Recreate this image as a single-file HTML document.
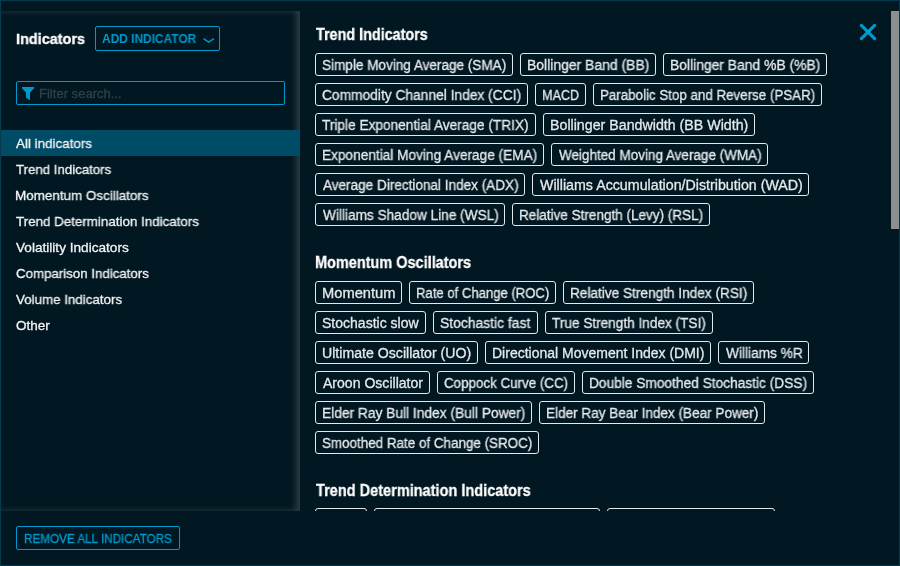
<!DOCTYPE html>
<html><head><meta charset="utf-8"><style>
html,body{margin:0;padding:0;}
body{width:900px;height:566px;overflow:hidden;position:relative;background:#011721;font-family:'Liberation Sans', sans-serif;}
.frame{position:absolute;left:0;top:0;width:898px;height:564px;border:1px solid #05394b;}
.panel{position:absolute;left:1px;top:11px;width:299px;height:500px;background:#011721;box-shadow:inset -4px 0 6px rgba(255,255,255,0.17);}
.sel{position:absolute;left:1px;top:130px;width:299px;height:26px;background:#004b66;}
.btn{position:absolute;border:1px solid #0099cc;border-radius:2px;box-sizing:border-box;}
.t{position:absolute;will-change:transform;-webkit-text-stroke:0.3px currentColor;white-space:nowrap;line-height:40px;height:40px;transform-origin:0 0;}
.clip{position:absolute;left:300px;top:11px;width:591px;height:500px;overflow:hidden;}
.chip{position:absolute;height:23px;box-sizing:border-box;border:1px solid #e4e9ec;border-radius:3px;}
.thumb{position:absolute;left:891px;top:11px;width:8px;height:218px;background:#8f8f8f;}
</style></head><body>
<div class="frame"></div>
<div class="panel"></div>
<div class="sel"></div>
<div class="btn" style="left:95px;top:26px;width:125px;height:25px"></div>
<svg style="position:absolute;left:202px;top:36px" width="14" height="8" viewBox="0 0 14 8"><path d="M1.5 2.6 L6.7 6.2 L11.9 2.6" fill="none" stroke="#0099cc" stroke-width="1.4"/></svg>
<div class="btn" style="left:16px;top:81px;width:269px;height:24px"></div>
<svg style="position:absolute;left:21px;top:86px" width="14" height="15" viewBox="0 0 14 15"><path d="M1 1.1 H13.2 V2.3 L9 6.5 V14 H8.3 L5 11.4 V6.5 L1 2.3 Z" fill="#0099cc"/></svg>
<div class="btn" style="left:16px;top:526px;width:164px;height:24px;border-color:#0099cc"></div>
<div class="clip">
<div class="chip" style="left:15px;top:42px;width:198px"></div><div class="chip" style="left:220px;top:42px;width:136px"></div><div class="chip" style="left:363px;top:42px;width:164px"></div><div class="chip" style="left:15px;top:72px;width:213px"></div><div class="chip" style="left:235px;top:72px;width:51px"></div><div class="chip" style="left:293px;top:72px;width:229px"></div><div class="chip" style="left:15px;top:102px;width:221px"></div><div class="chip" style="left:243px;top:102px;width:212px"></div><div class="chip" style="left:15px;top:132px;width:229px"></div><div class="chip" style="left:251px;top:132px;width:217px"></div><div class="chip" style="left:15px;top:162px;width:210px"></div><div class="chip" style="left:232px;top:162px;width:277px"></div><div class="chip" style="left:15px;top:192px;width:190px"></div><div class="chip" style="left:212px;top:192px;width:198px"></div><div class="chip" style="left:15px;top:270px;width:87px"></div><div class="chip" style="left:109px;top:270px;width:147px"></div><div class="chip" style="left:263px;top:270px;width:191px"></div><div class="chip" style="left:15px;top:300px;width:111px"></div><div class="chip" style="left:133px;top:300px;width:105px"></div><div class="chip" style="left:245px;top:300px;width:168px"></div><div class="chip" style="left:15px;top:330px;width:163px"></div><div class="chip" style="left:185px;top:330px;width:226px"></div><div class="chip" style="left:418px;top:330px;width:91px"></div><div class="chip" style="left:15px;top:360px;width:115px"></div><div class="chip" style="left:137px;top:360px;width:138px"></div><div class="chip" style="left:282px;top:360px;width:232px"></div><div class="chip" style="left:15px;top:390px;width:217px"></div><div class="chip" style="left:239px;top:390px;width:226px"></div><div class="chip" style="left:15px;top:420px;width:224px"></div><div class="chip" style="left:15px;top:497px;width:52px"></div><div class="chip" style="left:74px;top:497px;width:226px"></div><div class="chip" style="left:307px;top:497px;width:168px"></div>
</div>
<div class="t" style="left:15.98px;top:19.01px;font-size:15px;font-weight:700;color:#ffffff;transform:scaleX(0.9640)">Indicators</div><div class="t" style="left:101.96px;top:18.83px;font-size:12px;font-weight:700;color:#0099cc;transform:scaleX(0.9927);-webkit-text-stroke:0px currentColor">ADD INDICATOR</div><div class="t" style="left:38.70px;top:73.83px;font-size:12.5px;font-weight:400;color:#2f4149;transform:scaleX(1.0435)">Filter search...</div><div class="t" style="left:16.04px;top:123.98px;font-size:13.5px;font-weight:400;color:#f2f4f5;transform:scaleX(0.9932)">All indicators</div><div class="t" style="left:16.02px;top:149.98px;font-size:13.5px;font-weight:400;color:#f2f4f5;transform:scaleX(0.9814)">Trend Indicators</div><div class="t" style="left:15.41px;top:175.98px;font-size:13.5px;font-weight:400;color:#f2f4f5;transform:scaleX(0.9949)">Momentum Oscillators</div><div class="t" style="left:16.01px;top:201.98px;font-size:13.5px;font-weight:400;color:#f2f4f5;transform:scaleX(0.9904)">Trend Determination Indicators</div><div class="t" style="left:16.00px;top:227.98px;font-size:13.5px;font-weight:400;color:#f2f4f5;transform:scaleX(1.0084)">Volatility Indicators</div><div class="t" style="left:15.65px;top:253.98px;font-size:13.5px;font-weight:400;color:#f2f4f5;transform:scaleX(0.9842)">Comparison Indicators</div><div class="t" style="left:16.01px;top:279.98px;font-size:13.5px;font-weight:400;color:#f2f4f5;transform:scaleX(0.9890)">Volume Indicators</div><div class="t" style="left:15.67px;top:305.98px;font-size:13.5px;font-weight:400;color:#f2f4f5;transform:scaleX(1.0030)">Other</div><div class="t" style="left:23.77px;top:518.77px;font-size:12px;font-weight:400;color:#0099cc;transform:scaleX(0.9741)">REMOVE ALL INDICATORS</div><div class="t" style="left:315.61px;top:15.00px;font-size:16px;font-weight:700;color:#ffffff;transform:scaleX(0.8982)">Trend Indicators</div><div class="t" style="left:315.20px;top:243.00px;font-size:16px;font-weight:700;color:#ffffff;transform:scaleX(0.9051)">Momentum Oscillators</div><div class="t" style="left:315.80px;top:471.00px;font-size:16px;font-weight:700;color:#ffffff;transform:scaleX(0.9084)">Trend Determination Indicators</div><div class="t" style="left:322.02px;top:44.91px;font-size:14px;font-weight:400;color:#e4e9ec;transform:scaleX(0.9675)">Simple Moving Average (SMA)</div><div class="t" style="left:526.89px;top:44.91px;font-size:14px;font-weight:400;color:#e4e9ec;transform:scaleX(0.9951)">Bollinger Band (BB)</div><div class="t" style="left:669.90px;top:44.91px;font-size:14px;font-weight:400;color:#e4e9ec;transform:scaleX(0.9901)">Bollinger Band %B (%B)</div><div class="t" style="left:322.12px;top:74.91px;font-size:14px;font-weight:400;color:#e4e9ec;transform:scaleX(0.9838)">Commodity Channel Index (CCI)</div><div class="t" style="left:541.98px;top:74.91px;font-size:14px;font-weight:400;color:#e4e9ec;transform:scaleX(0.9011)">MACD</div><div class="t" style="left:599.93px;top:74.91px;font-size:14px;font-weight:400;color:#e4e9ec;transform:scaleX(0.9532)">Parabolic Stop and Reverse (PSAR)</div><div class="t" style="left:322.49px;top:104.91px;font-size:14px;font-weight:400;color:#e4e9ec;transform:scaleX(0.9759)">Triple Exponential Average (TRIX)</div><div class="t" style="left:549.87px;top:104.91px;font-size:14px;font-weight:400;color:#e4e9ec;transform:scaleX(1.0154)">Bollinger Bandwidth (BB Width)</div><div class="t" style="left:321.91px;top:134.91px;font-size:14px;font-weight:400;color:#e4e9ec;transform:scaleX(0.9750)">Exponential Moving Average (EMA)</div><div class="t" style="left:558.58px;top:134.91px;font-size:14px;font-weight:400;color:#e4e9ec;transform:scaleX(0.9632)">Weighted Moving Average (WMA)</div><div class="t" style="left:322.55px;top:164.91px;font-size:14px;font-weight:400;color:#e4e9ec;transform:scaleX(0.9679)">Average Directional Index (ADX)</div><div class="t" style="left:539.57px;top:164.91px;font-size:14px;font-weight:400;color:#e4e9ec;transform:scaleX(1.0167)">Williams Accumulation/Distribution (WAD)</div><div class="t" style="left:322.58px;top:194.91px;font-size:14px;font-weight:400;color:#e4e9ec;transform:scaleX(0.9737)">Williams Shadow Line (WSL)</div><div class="t" style="left:518.92px;top:194.91px;font-size:14px;font-weight:400;color:#e4e9ec;transform:scaleX(0.9657)">Relative Strength (Levy) (RSL)</div><div class="t" style="left:321.84px;top:272.91px;font-size:14px;font-weight:400;color:#e4e9ec;transform:scaleX(1.0498)">Momentum</div><div class="t" style="left:415.94px;top:272.91px;font-size:14px;font-weight:400;color:#e4e9ec;transform:scaleX(0.9359)">Rate of Change (ROC)</div><div class="t" style="left:569.91px;top:272.91px;font-size:14px;font-weight:400;color:#e4e9ec;transform:scaleX(0.9734)">Relative Strength Index (RSI)</div><div class="t" style="left:321.99px;top:302.91px;font-size:14px;font-weight:400;color:#e4e9ec;transform:scaleX(1.0009)">Stochastic slow</div><div class="t" style="left:440.00px;top:302.91px;font-size:14px;font-weight:400;color:#e4e9ec;transform:scaleX(0.9923)">Stochastic fast</div><div class="t" style="left:552.49px;top:302.91px;font-size:14px;font-weight:400;color:#e4e9ec;transform:scaleX(0.9720)">True Strength Index (TSI)</div><div class="t" style="left:321.91px;top:332.91px;font-size:14px;font-weight:400;color:#e4e9ec;transform:scaleX(1.0094)">Ultimate Oscillator (UO)</div><div class="t" style="left:491.89px;top:332.91px;font-size:14px;font-weight:400;color:#e4e9ec;transform:scaleX(0.9999)">Directional Movement Index (DMI)</div><div class="t" style="left:725.58px;top:332.91px;font-size:14px;font-weight:400;color:#e4e9ec;transform:scaleX(0.9768)">Williams %R</div><div class="t" style="left:322.54px;top:362.91px;font-size:14px;font-weight:400;color:#e4e9ec;transform:scaleX(1.0038)">Aroon Oscillator</div><div class="t" style="left:444.14px;top:362.91px;font-size:14px;font-weight:400;color:#e4e9ec;transform:scaleX(0.9547)">Coppock Curve (CC)</div><div class="t" style="left:588.90px;top:362.91px;font-size:14px;font-weight:400;color:#e4e9ec;transform:scaleX(0.9797)">Double Smoothed Stochastic (DSS)</div><div class="t" style="left:321.90px;top:392.91px;font-size:14px;font-weight:400;color:#e4e9ec;transform:scaleX(0.9825)">Elder Ray Bull Index (Bull Power)</div><div class="t" style="left:545.92px;top:392.91px;font-size:14px;font-weight:400;color:#e4e9ec;transform:scaleX(0.9677)">Elder Ray Bear Index (Bear Power)</div><div class="t" style="left:322.03px;top:422.91px;font-size:14px;font-weight:400;color:#e4e9ec;transform:scaleX(0.9581)">Smoothed Rate of Change (SROC)</div>
<svg style="position:absolute;left:858px;top:22px" width="20" height="20" viewBox="0 0 20 20"><path d="M3.4 3.4 L16.6 16.6 M16.6 3.4 L3.4 16.6" stroke="#0099cc" stroke-width="3.2" stroke-linecap="round"/></svg>
<div class="thumb"></div>
</body></html>
